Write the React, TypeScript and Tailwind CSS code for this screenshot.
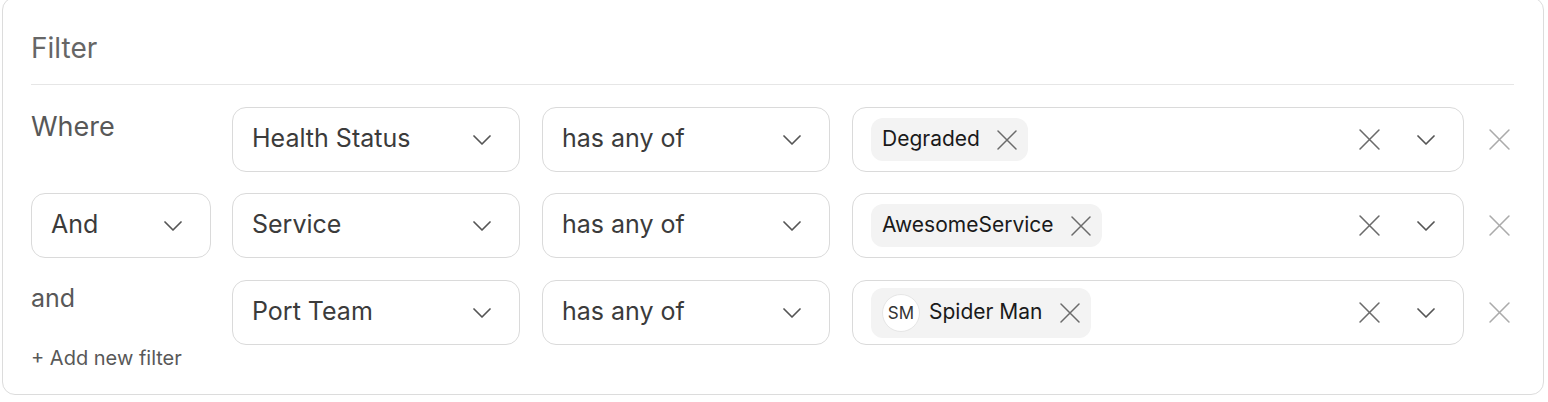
import React from "react";

const XIcon = ({ size, color, sw = 1.6 }: { size: number; color: string; sw?: number }) => (
  <svg width={size} height={size} viewBox="0 0 20 20" fill="none">
    <path d="M1 1L19 19M19 1L1 19" stroke={color} strokeWidth={sw} strokeLinecap="round" />
  </svg>
);

const Chevron = ({ color = "#555555" }: { color?: string }) => (
  <svg width="18" height="10" viewBox="0 0 18 10" fill="none">
    <path d="M1 1L9 9L17 1" stroke={color} strokeWidth="1.7" strokeLinecap="round" strokeLinejoin="round" />
  </svg>
);

const Select = ({ label, width }: { label: string; width: string }) => (
  <div
    className={`${width} h-[65px] shrink-0 border border-[#dadada] rounded-[14px] bg-white flex items-center justify-between pl-[19px] pr-[28px] text-[25px] leading-[30px] text-[#3b3b3b]`}
  >
    <span className="pb-[3px]">{label}</span>
    <Chevron />
  </div>
);

const ValueBox = ({ children }: { children: React.ReactNode }) => (
  <div className="w-[612px] h-[65px] shrink-0 border border-[#dadada] rounded-[14px] bg-white flex items-center pl-[18px] pr-[28px]">
    {children}
    <div className="ml-auto flex items-center">
      <XIcon size={21} color="#6b6b6b" sw={1.5} />
    </div>
    <div className="ml-[37px] flex items-center">
      <Chevron />
    </div>
  </div>
);

const Chip = ({ text }: { text: string }) => (
  <div className="h-[43px] rounded-[12px] bg-[#f3f3f3] px-[11px] flex items-center gap-[17px] text-[21px] leading-[26px] text-[#1a1a1a]">
    <span className="pb-[2px]">{text}</span>
    <XIcon size={20} color="#6b6b6b" sw={1.5} />
  </div>
);

const UserChip = () => (
  <div className="h-[50px] rounded-[12px] bg-[#f3f3f3] px-[11px] flex items-center text-[21px] leading-[26px] text-[#1a1a1a]">
    <div className="w-[38px] h-[38px] rounded-full bg-white border border-[#e6e6e6] flex items-center justify-center text-[17px] text-[#333333]">
      SM
    </div>
    <span className="ml-[9px] pb-[2px]">Spider Man</span>
    <div className="ml-[17px] flex items-center">
      <XIcon size={20} color="#6b6b6b" sw={1.5} />
    </div>
  </div>
);

const Fields = ({ field, value }: { field: string; value: React.ReactNode }) => (
  <div className="flex items-center">
    <Select label={field} width="w-[288px]" />
    <div className="ml-[22px]">
      <Select label="has any of" width="w-[288px]" />
    </div>
    <div className="ml-[22px]">
      <ValueBox>{value}</ValueBox>
    </div>
    <div className="ml-[25px] flex items-center">
      <XIcon size={21} color="#ababab" sw={1.5} />
    </div>
  </div>
);

export default function App() {
  return (
    <div className="pl-[2px] bg-white" style={{ fontFamily: "Inter, 'Noto Sans', sans-serif" }}>
      <div className="w-[1542px] mt-[-3px] border border-[#dcdcdc] rounded-[13px] bg-white pt-[33px] pl-[28px] pr-[29px] pb-[24px]">
        <div className="text-[28px] leading-[34px] text-[#666666]">Filter</div>
        <div className="mt-[19px] h-px bg-[#e6e6e6]" />
        <div className="mt-[22px] flex items-start">
          <div className="w-[180px] shrink-0 pt-[5px] text-[27px] leading-[30px] text-[#585858]">Where</div>
          <div className="ml-[21px]">
            <Fields field="Health Status" value={<Chip text="Degraded" />} />
          </div>
        </div>
        <div className="mt-[21px] flex items-start">
          <Select label="And" width="w-[180px]" />
          <div className="ml-[21px]">
            <Fields field="Service" value={<Chip text="AwesomeService" />} />
          </div>
        </div>
        <div className="mt-[22px] flex items-start">
          <div className="w-[180px] shrink-0 pt-[3px]">
            <div className="text-[25px] leading-[30px] text-[#585858]">and</div>
            <div className="mt-[33px] text-[20px] leading-[24px] text-[#585858]">+ Add new filter</div>
          </div>
          <div className="ml-[21px]">
            <Fields field="Port Team" value={<UserChip />} />
          </div>
        </div>
      </div>
    </div>
  );
}
